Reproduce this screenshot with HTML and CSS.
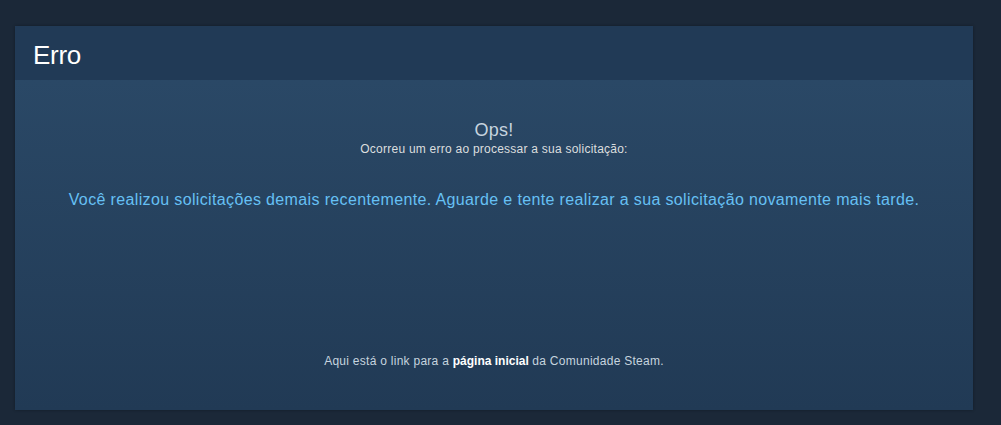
FILE: index.html
```html
<!DOCTYPE html>
<html lang="pt">
<head>
<meta charset="utf-8">
<link rel="stylesheet" href="styles.css">
<title>Erro</title>
</head>
<body>
<div class="page">
  <div class="panel">
    <div class="panel-head"><h1 class="title">Erro</h1></div>
    <div class="panel-body">
      <div class="ops">Ops!</div>
      <div class="sub">Ocorreu um erro ao processar a sua solicitação:</div>
      <div class="msg">Você realizou solicitações demais recentemente. Aguarde e tente realizar a sua solicitação novamente mais tarde.</div>
      <div class="foot">Aqui está o link para a <a class="link" href="#">página inicial</a> da Comunidade Steam.</div>
    </div>
  </div>
</div>
</body>
</html>
```
FILE: styles.css
```css
html, body { margin: 0; padding: 0; }
body {
  background: #1b2838;
  font-family: "Liberation Sans", Arial, sans-serif;
  width: 1001px;
  height: 425px;
  overflow: hidden;
}
.page { padding: 26px 28px 0 15px; }
.panel {
  width: 958px;
  box-shadow: 0 0 3px rgba(0,0,0,0.3);
}
.panel-head {
  background: #213a56;
  height: 54px;
  display: flex;
  align-items: center;
  padding-left: 18px;
}
.title {
  margin: 0;
  font-weight: normal;
  font-size: 26px;
  color: #ffffff;
  line-height: 1;
  padding-top: 4px;
  letter-spacing: -0.3px;
}
.panel-body {
  height: 330px;
  background: linear-gradient(to bottom, #2a4866 0%, #213a55 100%);
  display: flex;
  flex-direction: column;
  align-items: center;
  padding-top: 40px;
  box-sizing: border-box;
}
.ops { font-size: 18px; color: #c6d4df; line-height: 21px; letter-spacing: 0.3px; }
.sub { font-size: 12px; color: #dcdedf; line-height: 16px; letter-spacing: 0.24px; }
.msg { font-size: 16px; color: #66c0f4; margin-top: 33px; line-height: 20px; letter-spacing: 0.36px; }
.foot { font-size: 12px; color: #c6d4df; margin-top: 143px; line-height: 16px; letter-spacing: 0.27px; }
.link { color: #ffffff; text-decoration: none; font-weight: bold; letter-spacing: 0; }
```
